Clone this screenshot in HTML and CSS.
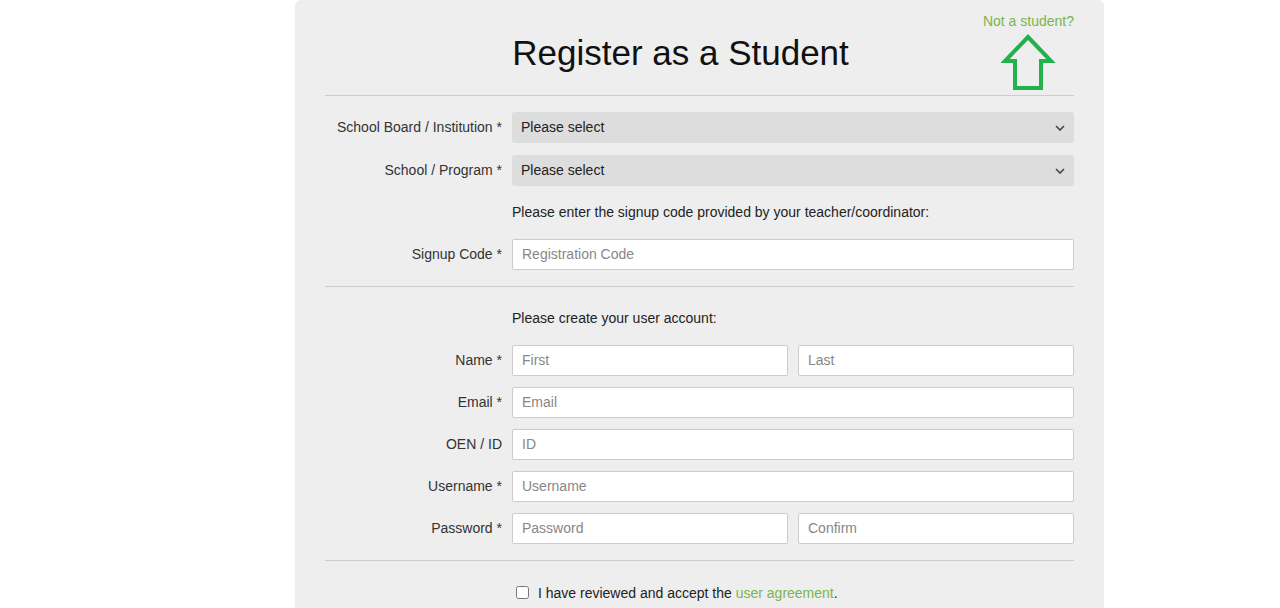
FILE: index.html
```html
<!DOCTYPE html>
<html>
<head>
<meta charset="utf-8">
<link rel="stylesheet" href="styles.css">
</head>
<body>
<div class="panel">
  <a class="not-student" href="#">Not a student?</a>
  <svg class="arrow" width="56" height="60" viewBox="0 0 56 60">
    <polygon points="27,4 4,28 14,28 14,55 40,55 40,28 50,28" fill="none" stroke="#22b14c" stroke-width="4" stroke-linejoin="miter"/>
  </svg>
  <div class="header"><h1 class="title">Register as a Student</h1></div>
  <hr class="sep">
  <div class="row row-first">
    <label class="lbl">School Board / Institution *</label>
    <div class="select"><span>Please select</span>
      <svg class="chev" width="10" height="6" viewBox="0 0 10 6"><path d="M1 1 L5 5 L9 1" fill="none" stroke="#444" stroke-width="1.6"/></svg>
    </div>
  </div>
  <div class="row row-sel2">
    <label class="lbl">School / Program *</label>
    <div class="select"><span>Please select</span>
      <svg class="chev" width="10" height="6" viewBox="0 0 10 6"><path d="M1 1 L5 5 L9 1" fill="none" stroke="#444" stroke-width="1.6"/></svg>
    </div>
  </div>
  <div class="note note-code">Please enter the signup code provided by your teacher/coordinator:</div>
  <div class="row row-code">
    <label class="lbl">Signup Code *</label>
    <input class="inp" type="text" placeholder="Registration Code">
  </div>
  <hr class="sep">
  <div class="note note-acct">Please create your user account:</div>
  <div class="row row-name">
    <label class="lbl">Name *</label>
    <div class="pair">
      <input class="inp" type="text" placeholder="First">
      <input class="inp" type="text" placeholder="Last">
    </div>
  </div>
  <div class="row row-next">
    <label class="lbl">Email *</label>
    <input class="inp" type="text" placeholder="Email">
  </div>
  <div class="row row-next">
    <label class="lbl">OEN / ID</label>
    <input class="inp" type="text" placeholder="ID">
  </div>
  <div class="row row-next">
    <label class="lbl">Username *</label>
    <input class="inp" type="text" placeholder="Username">
  </div>
  <div class="row row-next">
    <label class="lbl">Password *</label>
    <div class="pair">
      <input class="inp" type="password" placeholder="Password">
      <input class="inp" type="password" placeholder="Confirm">
    </div>
  </div>
  <hr class="sep sep-last">
  <div class="agree">
    <input class="chk" type="checkbox">
    <span>I have reviewed and accept the <a href="#" class="green">user agreement</a>.</span>
  </div>
</div>
</body>
</html>
```

FILE: styles.css
```css
* { box-sizing: border-box; }
html, body { margin: 0; padding: 0; background: #fff; }
body {
  font-family: "Liberation Sans", Arial, sans-serif;
  font-size: 14px;
  color: #333;
  height: 608px;
  overflow: hidden;
}
.panel {
  position: relative;
  margin-left: 295px;
  width: 809px;
  min-height: 640px;
  background: #eeeeee;
  border-radius: 6px 6px 0 0;
  padding: 0 30px;
}
.not-student {
  position: absolute;
  top: 12px;
  right: 30px;
  color: #7ab648;
  text-decoration: none;
  font-size: 14px;
  line-height: 18px;
}
.arrow {
  position: absolute;
  top: 33px;
  left: 706px;
}
.header {
  padding-top: 33px;
  padding-right: 38px;
  height: 95px;
  text-align: center;
}
.title {
  margin: 0;
  font-weight: normal;
  font-size: 35px;
  line-height: 40px;
  color: #111;
}
.sep {
  margin: 0;
  border: 0;
  border-top: 1px solid #cccccc;
  height: 0;
}
.row {
  display: grid;
  grid-template-columns: 177px 1fr;
  column-gap: 10px;
  align-items: center;
  height: 31px;
}
.row-first { margin-top: 16px; }
.row-sel2 { margin-top: 12px; }
.row-code { margin-top: 17px; margin-bottom: 16px; }
.row-name { margin-top: 17px; }
.row-next { margin-top: 11px; }
.sep-last { margin-top: 16px; }
.lbl {
  text-align: right;
  line-height: 20px;
  padding-bottom: 2px;
  color: #333;
}
.select {
  position: relative;
  height: 31px;
  background: #dddddd;
  border-radius: 3px;
  padding: 0 9px;
  line-height: 30px;
  color: #222;
}
.chev {
  position: absolute;
  right: 9px;
  top: 13px;
}
.note {
  padding-left: 187px;
  line-height: 20px;
  color: #222;
}
.note-code { margin-top: 16px; }
.note-acct { margin-top: 21px; }
.inp {
  width: 100%;
  height: 31px;
  border: 1px solid #cccccc;
  border-radius: 2px;
  background: #fff;
  padding: 0 9px 1px;
  font-family: "Liberation Sans", Arial, sans-serif;
  font-size: 14px;
  color: #333;
  outline: none;
}
.inp::placeholder { color: #888; }
.pair {
  display: grid;
  grid-template-columns: 1fr 1fr;
  column-gap: 10px;
}
.agree {
  margin-top: 22px;
  padding-left: 191px;
  display: flex;
  align-items: center;
  line-height: 20px;
  color: #222;
}
.chk {
  margin: 0 9px 2px 0;
  width: 13px;
  height: 13px;
}
.green { color: #7ab648; text-decoration: none; }
```
